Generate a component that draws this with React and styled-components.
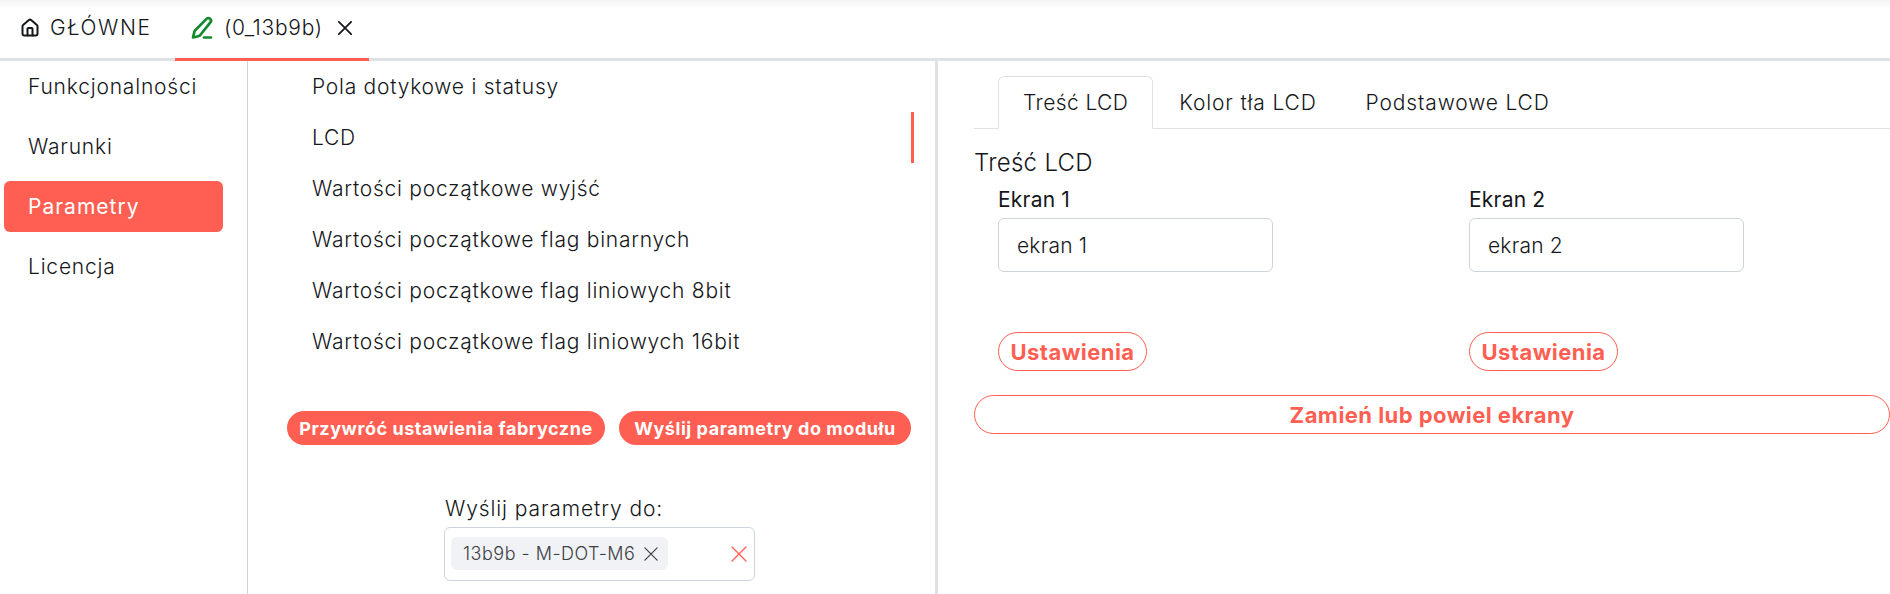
import React from 'react';
import styled, { createGlobalStyle } from 'styled-components';

const Global = createGlobalStyle`
  html, body { margin: 0; padding: 0; background: #fff; }
  body { font-family: Inter, "Noto Sans", sans-serif; font-weight: 300; font-size: 21px; color: #15171a; overflow: hidden; }
  * { box-sizing: border-box; }
`;
const Page = styled.div`width: 1890px; height: 594px; display: flex; flex-direction: column; overflow: hidden;`;
const TopBar = styled.div`
  height: 61px; flex: none; display: flex; align-items: stretch; border-bottom: 3px solid #dee2e6;
  background: linear-gradient(#f3f3f3, #fff 9px);
`;
const TopTab = styled.div`
  display: flex; align-items: center; margin-bottom: -3px; padding-bottom: 3px;
  width: ${p => p.$w}px; padding-left: ${p => p.$pl}px; gap: ${p => p.$gap}px;
  border-bottom: 3px solid ${p => (p.$active ? '#ff5f52' : 'transparent')};
`;
const TopLabel = styled.span`letter-spacing: ${p => p.$ls}px;`;
const Body = styled.div`flex: 1; display: flex; min-height: 0;`;
const Side = styled.nav`width: 248px; flex: none; border-right: 1px solid #ced4da; padding: 0 24px 0 4px; display: flex; flex-direction: column; gap: 9px;`;
const SideItem = styled.div`
  height: 51px; display: flex; align-items: center; padding-left: 24px; border-radius: 6px; letter-spacing: .8px;
  ${p => p.$active && 'background: #ff5f52; color: #fff; font-weight: 400; letter-spacing: 1px;'}
`;
const Middle = styled.section`width: 690px; flex: none; border-right: 3px solid #dee2e6; display: flex; flex-direction: column;`;
const SubList = styled.div`display: flex; flex-direction: column; padding-right: 21px;`;
const SubItem = styled.div`
  height: 51px; display: flex; align-items: center; padding-left: 64px; letter-spacing: .75px;
  border-right: 3px solid ${p => (p.$active ? '#ff5f52' : 'transparent')};
`;
const ActionRow = styled.div`display: flex; gap: 14px; margin: 44px 0 0 39px;`;
const FilledBtn = styled.button`
  height: 34px; border: 0; border-radius: 17px; background: #ff5f52; color: #fff; font: 700 18px Inter, sans-serif; letter-spacing: .55px; padding: 0; width: ${p => p.$w}px; text-align: center;
`;
const SendBlock = styled.div`margin: 49px 0 0 196px; width: 311px;`;
const SendLabel = styled.div`line-height: 30px; padding-left: 1px; letter-spacing: .9px;`;
const SelectBox = styled.div`
  position: relative; height: 54px; margin-top: 3px; border: 1px solid #ced4da; border-radius: 6px; padding: 9px 6px; display: flex;
`;
const Chip = styled.div`
  width: 217px; height: 33px; border-radius: 6px; background: #f0f2f5; display: flex; align-items: center; justify-content: space-between; padding: 0 10px 0 12px;
  font-size: 18px; letter-spacing: .5px; color: #3c4043;
`;
const Clear = styled.span`position: absolute; right: 7px; top: 18px; display: flex; color: #ff5f52;`;
const Right = styled.section`flex: 1; min-width: 0; padding: 15px 0 0 36px; display: flex; flex-direction: column;`;
const TabBar = styled.div`height: 53px; display: flex; gap: 3px; padding-left: 24px; border-bottom: 1px solid #dee2e6;`;
const Tab = styled.div`
  height: 53px; padding: 0 ${p => (p.$active ? 24 : 22)}px; display: flex; align-items: center; letter-spacing: ${p => p.$ls}px; border-radius: 6px 6px 0 0;
  border: 1px solid ${p => (p.$active ? '#dee2e6' : 'transparent')};
  ${p => p.$active && 'border-bottom-color: #fff;'}
`;
const Heading = styled.h2`margin: 19px 0 0; font-size: 24px; font-weight: 300; letter-spacing: .3px; line-height: 30px;`;
const Cols = styled.div`display: flex; padding-left: 24px; margin-top: 7px;`;
const Col = styled.div`width: 471px; flex: none; display: flex; flex-direction: column; align-items: flex-start;`;
const FieldLabel = styled.label`line-height: 30px; font-size: 21px; font-weight: 400; letter-spacing: .2px;`;
const TextBox = styled.div`
  width: 275px; height: 54px; margin-top: 3px; border: 1px solid #ced4da; border-radius: 6px; display: flex; align-items: center; padding-left: 18px; letter-spacing: .2px;
`;
const OutlineBtn = styled.button`
  height: 39px; margin-top: 60px; border: 1px solid #ff5f52; border-radius: 20px; background: #fff; color: #ff5f52; font: 700 22px Inter, sans-serif; letter-spacing: .45px; padding: 0; width: 149px;
`;
const WideBtn = styled(OutlineBtn)`width: 100%; margin-top: 24px; display: block;`;
const CloseWrap = styled.span`display: flex; margin-left: 5px;`;

const Cross = ({ size = 14, weight = 1.6, color = 'currentColor' }) => (
  <svg width={size} height={size} viewBox="0 0 16 16" fill="none" stroke={color} strokeWidth={weight} strokeLinecap="round">
    <path d="M1 1l14 14M15 1L1 15" />
  </svg>
);
const Home = () => (
  <svg width="20" height="20" viewBox="0 0 24 24" fill="none" stroke="#15171a" strokeWidth="2.4" strokeLinecap="round" strokeLinejoin="round">
    <path d="M15 21v-8a1 1 0 0 0-1-1h-4a1 1 0 0 0-1 1v8" />
    <path d="M3 10a2 2 0 0 1 .709-1.528l7-5.999a2 2 0 0 1 2.582 0l7 5.999A2 2 0 0 1 21 10v9a2 2 0 0 1-2 2H5a2 2 0 0 1-2-2z" />
  </svg>
);
const Pen = () => (
  <svg width="24" height="24" viewBox="0 0 24 24" fill="none" stroke="#128a2e" strokeWidth="2.7" strokeLinecap="round" strokeLinejoin="round">
    <path d="M14 21.5h7" />
    <path d="M20.2 6.6a2.6 2.6 0 0 0-3.7-3.7L5 14.5a2 2 0 0 0-.5.9L3 21.5l6-1.5a2 2 0 0 0 .9-.5z" />
  </svg>
);

export default function App() {
  return (
    <Page>
      <Global />
      <TopBar>
        <TopTab $w={175} $pl={20} $gap={10}><Home /><TopLabel $ls={1.6}>GŁÓWNE</TopLabel></TopTab>
        <TopTab $active $w={194} $pl={15} $gap={10}>
          <Pen /><TopLabel $ls={.7}>(0_13b9b)</TopLabel>
          <CloseWrap><Cross size={14} weight={2} color="#15171a" /></CloseWrap>
        </TopTab>
      </TopBar>
      <Body>
        <Side>
          <SideItem>Funkcjonalności</SideItem>
          <SideItem>Warunki</SideItem>
          <SideItem $active>Parametry</SideItem>
          <SideItem>Licencja</SideItem>
        </Side>
        <Middle>
          <SubList>
            <SubItem>Pola dotykowe i statusy</SubItem>
            <SubItem $active>LCD</SubItem>
            <SubItem>Wartości początkowe wyjść</SubItem>
            <SubItem>Wartości początkowe flag binarnych</SubItem>
            <SubItem>Wartości początkowe flag liniowych 8bit</SubItem>
            <SubItem>Wartości początkowe flag liniowych 16bit</SubItem>
          </SubList>
          <ActionRow>
            <FilledBtn $w={318}>Przywróć ustawienia fabryczne</FilledBtn>
            <FilledBtn $w={292}>Wyślij parametry do modułu</FilledBtn>
          </ActionRow>
          <SendBlock>
            <SendLabel>Wyślij parametry do:</SendLabel>
            <SelectBox>
              <Chip>13b9b - M-DOT-M6<Cross size={14} weight={1.4} color="#3c4043" /></Chip>
              <Clear><Cross size={16} weight={1.4} /></Clear>
            </SelectBox>
          </SendBlock>
        </Middle>
        <Right>
          <TabBar>
            <Tab $active $ls={.4}>Treść LCD</Tab>
            <Tab $ls={.85}>Kolor tła LCD</Tab>
            <Tab $ls={.85}>Podstawowe LCD</Tab>
          </TabBar>
          <Heading>Treść LCD</Heading>
          <Cols>
            <Col>
              <FieldLabel>Ekran 1</FieldLabel>
              <TextBox>ekran 1</TextBox>
              <OutlineBtn>Ustawienia</OutlineBtn>
            </Col>
            <Col>
              <FieldLabel>Ekran 2</FieldLabel>
              <TextBox>ekran 2</TextBox>
              <OutlineBtn>Ustawienia</OutlineBtn>
            </Col>
          </Cols>
          <WideBtn>Zamień lub powiel ekrany</WideBtn>
        </Right>
      </Body>
    </Page>
  );
}
